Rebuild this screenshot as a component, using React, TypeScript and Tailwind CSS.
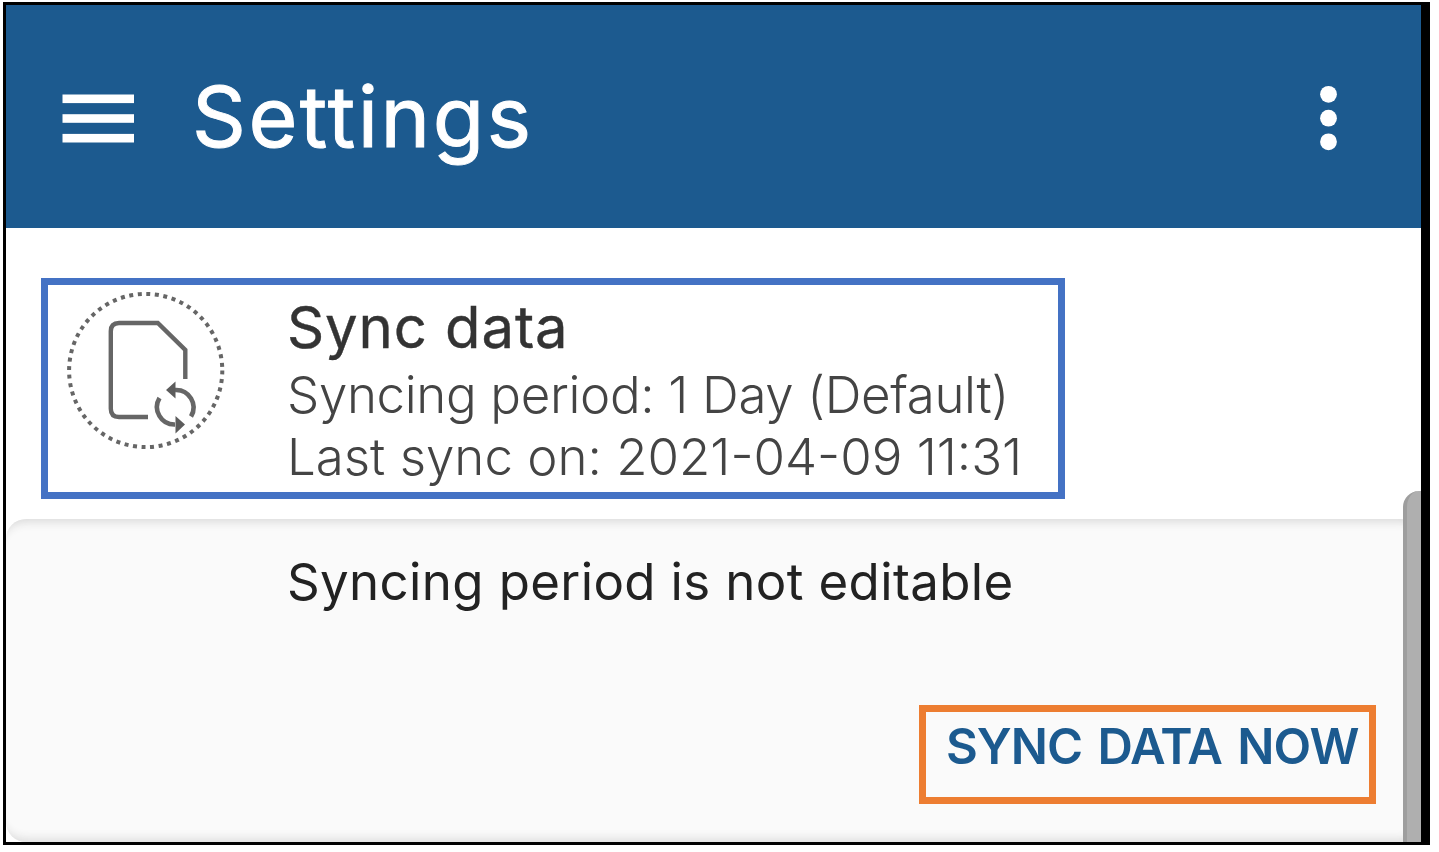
function MenuIcon() {
  return (
    <svg className="mt-[4px] h-[50px] w-[73px]" viewBox="0 0 73 50" fill="#fff">
      <rect x="0.5" y="0.5" width="71.5" height="8.6" />
      <rect x="0.5" y="20.2" width="71.5" height="8.6" />
      <rect x="0.5" y="39.9" width="71.5" height="8.6" />
    </svg>
  );
}

function MoreIcon() {
  return (
    <svg className="mt-[2px] h-[66px] w-[18px]" viewBox="0 0 18 66" fill="#fff">
      <circle cx="9.5" cy="9.3" r="8.4" />
      <circle cx="9.5" cy="33.2" r="8.4" />
      <circle cx="9.5" cy="56.8" r="8.4" />
    </svg>
  );
}

function SyncFileIcon() {
  return (
    <svg className="h-[160px] w-[160px] shrink-0" viewBox="0 0 160 160" fill="none" stroke="#666">
      <circle cx="79.7" cy="81.5" r="76.6" strokeWidth="4" strokeDasharray="4 4.595" />
      <path d="M82 128H53Q44.8 128 44.8 119.8V42.3Q44.8 34 53 34H91.8L119.3 61V90" strokeWidth="4.4" />
      <path d="M93.5 109A17.5 17.5 0 0 0 109 135.5M125 127.500A17.500 17.500 0 0 0 109 101" strokeWidth="4.600" />
      <path d="M100 101L109.500 92.500V109.500ZM119 135.500L109.500 127V144.500Z" fill="#5c5c5c" stroke="none" />
    </svg>
  );
}

export default function App() {
  return (
    <div className="h-[852px] w-[1439px] overflow-hidden bg-white pt-[2px] pl-[3px] font-['Inter','Liberation_Sans',sans-serif]">
      <div className="relative flex h-[843px] w-[1427px] flex-col overflow-hidden border-[3px] border-r-[9px] border-black bg-white whitespace-nowrap">
        <header className="flex h-[223px] shrink-0 items-center bg-[#1c5a8f] pr-[84px] pl-[56px]">
          <MenuIcon />
          <h1 className="ml-[57px] flex-1 text-[84px] leading-[100px] tracking-[2.5px] text-white [-webkit-text-stroke:1px_#fff]">Settings</h1>
          <MoreIcon />
        </header>

        <section className="mt-[50px] ml-[35px] flex h-[221px] w-[1024px] shrink-0 border-[7px] border-[#4472c4] pt-1 pl-[18px]">
          <SyncFileIcon />
          <div className="ml-[61px] pt-[5px]">
            <h2 className="text-[58px] leading-[66px] tracking-[0.9px] text-[#333] [-webkit-text-stroke:0.4px_#333]">Sync data</h2>
            <p className="mt-[4px] text-[51px] leading-[62px] font-light tracking-[-0.34px] text-[#444]">Syncing period: 1 Day (Default)</p>
            <p className="text-[51px] leading-[62px] font-light text-[#444]">Last sync on: 2021-04-09 11:31</p>
          </div>
        </section>

        <section className="mt-[20px] flex h-[323px] shrink-0 flex-col rounded-[20px] bg-[#fafafa] pt-[32px] shadow-[inset_0_11px_10px_-8px_#dadada,inset_0_-11px_10px_-8px_#dcdcdc]">
          <p className="pl-[281px] text-[51px] leading-[62px] tracking-[0.36px] text-[#222]">Syncing period is not editable</p>
          <button className="mt-[92px] mr-[45px] flex h-[99px] w-[457px] items-start self-end border-[7px] border-[#ed7d31] pt-[4px] pl-[20px] text-[49px] leading-[62px] font-semibold tracking-[-1px] [word-spacing:4px] text-[#1c5a8f]">
            SYNC DATA NOW
          </button>
        </section>

        <div className="absolute top-[486px] right-0 h-[360px] w-[18px] rounded-tl-[16px] border-l-[4px] border-[#9e9e9e] bg-[#afafaf]" />
      </div>
    </div>
  );
}
